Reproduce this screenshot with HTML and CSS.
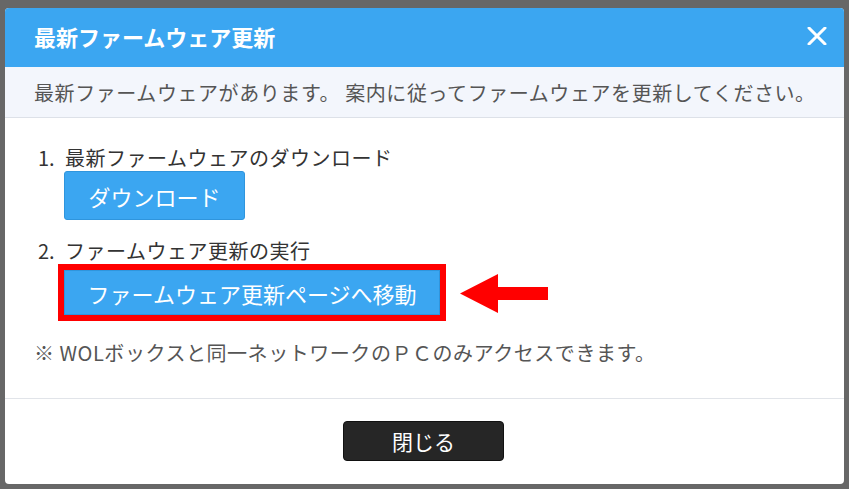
FILE: index.html
```html
<!DOCTYPE html>
<html lang="ja">
<head>
<meta charset="utf-8">
<title>最新ファームウェア更新</title>
<link rel="stylesheet" href="styles.css">
</head>
<body>
<div class="dialog">
  <div class="dialog-header">
    <h1 class="dialog-title">最新ファームウェア更新</h1>
    <button class="close-x" aria-label="閉じる">
      <svg width="20" height="18" viewBox="0 0 20 18"><path d="M2 1 L18 17 M18 1 L2 17" stroke="#fff" stroke-width="3" stroke-linecap="round"/></svg>
    </button>
  </div>
  <div class="dialog-lead">最新ファームウェアがあります。 案内に従ってファームウェアを更新してください。</div>
  <div class="dialog-body">
    <div class="step">
      <div class="step-label"><span class="step-num">1.</span>最新ファームウェアのダウンロード</div>
      <div class="step-action">
        <button class="btn-blue btn-download">ダウンロード</button>
      </div>
    </div>
    <div class="step step-2">
      <div class="step-label"><span class="step-num">2.</span>ファームウェア更新の実行</div>
      <div class="step-action highlight-row">
        <span class="highlight-box"><button class="btn-blue btn-move">ファームウェア更新ページへ移動</button></span>
        <svg class="arrow" width="88" height="39" viewBox="0 0 88 39"><polygon points="0,19.5 38,0 38,13 88,13 88,26 38,26 38,39" fill="#ff0000"/></svg>
      </div>
    </div>
    <p class="note">※ WOLボックスと同一ネットワークのＰＣのみアクセスできます。</p>
  </div>
  <div class="dialog-footer">
    <button class="btn-dark">閉じる</button>
  </div>
</div>
</body>
</html>
```

FILE: styles.css
```css
html, body {
  margin: 0;
  padding: 0;
}
body {
  background: #676767;
  padding: 8px 5px 5px 5px;
  font-family: "Noto Sans CJK JP", "Noto Sans", sans-serif;
}
.dialog {
  width: 839px;
  height: 476px;
  background: #ffffff;
  border-radius: 4px;
  overflow: hidden;
  display: flex;
  flex-direction: column;
}
.dialog-header {
  height: 59px;
  background: #3ba6f1;
  display: flex;
  align-items: center;
  justify-content: space-between;
  padding: 0 17px 0 29px;
  box-sizing: border-box;
}
.dialog-title {
  margin: 0;
  color: #ffffff;
  font-size: 22px;
  font-weight: 700;
  line-height: 26px;
  margin-top: -4px;
}
.close-x {
  background: none;
  border: 0;
  padding: 0;
  width: 20px;
  height: 18px;
  display: flex;
  margin-top: -4px;
}
.dialog-lead {
  background: #f3f6fc;
  border-bottom: 1px solid #dde1e8;
  color: #555555;
  font-size: 20px;
  line-height: 26px;
  letter-spacing: 0.58px;
  padding: 13px 0 0 29px;
  height: 37px;
}
.dialog-body {
  padding: 27px 0 0 29px;
  border-bottom: 1px solid #e1e4e9;
  box-sizing: border-box;
  height: 281px;
}
.step {
  color: #333333;
  font-size: 20px;
}
.step-2 {
  margin-top: 18px;
}
.step-label {
  line-height: 26px;
  padding-left: 4px;
  letter-spacing: 0.5px;
}
.step-num {
  display: inline-block;
  width: 27px;
  letter-spacing: 0;
}
.step-action {
  padding-left: 30px;
}
.highlight-row {
  display: flex;
  align-items: center;
  padding-left: 24px;
}
.btn-blue {
  font-family: "Noto Sans CJK JP", "Noto Sans", sans-serif;
  background: #3ba6f1;
  color: #ffffff;
  border: 1px solid #2f95dd;
  border-radius: 3px;
  font-size: 22px;
  padding: 0;
  display: flex;
  align-items: center;
  justify-content: center;
}
.btn-download {
  width: 181px;
  height: 49px;
}
.highlight-box {
  display: inline-block;
  border: 6px solid #ff0000;
}
.btn-move {
  width: 376px;
  height: 45px;
  border-radius: 0;
}
.arrow {
  display: block;
  margin-left: 14px;
  margin-top: 2px;
}
.note {
  margin: 19px 0 0 0;
  color: #555555;
  font-size: 20px;
  line-height: 26px;
  letter-spacing: 0.55px;
}
.dialog-footer {
  flex: 1;
  display: flex;
  justify-content: center;
  padding-top: 22px;
  box-sizing: border-box;
}
.btn-dark {
  font-family: "Noto Sans CJK JP", "Noto Sans", sans-serif;
  width: 161px;
  height: 40px;
  background: #262626;
  color: #ffffff;
  border: 1px solid #111111;
  border-radius: 4px;
  font-size: 21px;
  padding: 0;
  display: flex;
  align-items: center;
  justify-content: center;
  margin-left: -2px;
}
```
